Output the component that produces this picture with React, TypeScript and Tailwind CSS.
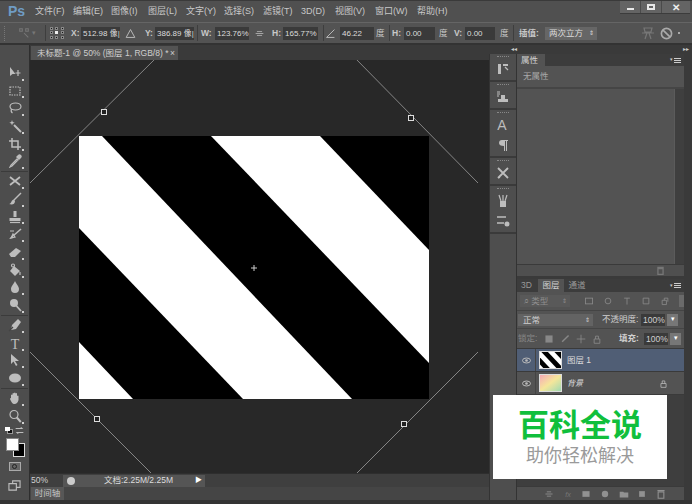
import React from "react";

const cjk = { fontFamily: '"Liberation Sans","Noto Sans CJK SC",sans-serif' };

const Ic = ({ children, w = 14, h = 14, className = "" }: { children: React.ReactNode; w?: number; h?: number; className?: string }) => (
  <svg width={w} height={h} viewBox="0 0 14 14" className={className} fill="none" stroke="#bdbdbd" strokeWidth="1.2">
    {children}
  </svg>
);

const fill = { fill: "#bdbdbd", stroke: "none" };

const tools: (React.ReactNode | null)[] = [
  <><path d="M2 1v9l2.500-2 3 0z" {...fill} /><path d="M10 4v6M7.500 7h5" /></>,
  <rect x="2" y="3" width="10" height="8" strokeDasharray="1.500 1" />,
  <><ellipse cx="7.500" cy="5.500" rx="5.500" ry="3.500" /><path d="M3.500 8q-1 3 1 4" /></>,
  <><path d="M6 6l7 7" strokeWidth="2" /><path d="M4 1l.7 2 2 .7-2 .7L4 6.500l-.7-2-2-.7 2-.7z" {...fill} /></>,
  <path d="M4 1v9h9M1 4h9v9" strokeWidth="1.500" />,
  <><path d="M9 5l-6 6-1 2 2-1 6-6z" /><path d="M8 3l3 3 2-2a1.400 1.400 0 0 0-3-3z" {...fill} /></>,
  null,
  <><path d="M2 3l10 8M12 3L2 11" strokeWidth="1.800" /></>,
  <><path d="M13 1L6 8" strokeWidth="1.400" /><path d="M6 7.500c-3 0-2 4-5 4.500 3 1 6 .5 6-3z" {...fill} /></>,
  <><path d="M5.500 1h3v6h-3zM1.500 8h11v3h-11z" {...fill} /><path d="M2 12.500h10" /></>,
  <><path d="M13 2L5 9" strokeWidth="1.500" /><path d="M2 4h4M3 11l4-1-2-3z" /><path d="M5 8l-4 4 4-1z" {...fill} /></>,
  <path d="M1 9l7-6 5 3-6 6H3z" {...fill} />,
  <><path d="M6 3l6 5-5 5-5-5z" {...fill} /><path d="M12 9v3" /><circle cx="5" cy="2.500" r="1.500" /></>,
  <path d="M7 1c1 3 4 5 4 8a4 4 0 0 1-8 0c0-3 3-5 4-8z" {...fill} />,
  <><circle cx="6" cy="5" r="4" {...fill} /><path d="M8.500 8l4.500 5" strokeWidth="1.800" /></>,
  null,
  <><path d="M10 1l3 3-5 7-5 1 1-5z" {...fill} /><path d="M1 13l4-4" stroke="#444" /></>,
  <text x="7" y="12.500" textAnchor="middle" fontFamily="Liberation Serif" fontSize="14" fill="#bdbdbd" stroke="none">T</text>,
  <path d="M3 1v10l2.500-2.500L8 13l1.500-1L7 8h4z" {...fill} />,
  <ellipse cx="7" cy="7" rx="6" ry="4.500" {...fill} />,
  null,
  <path d="M3 7V4q1-1 1.500 0V2.500q1-1 1.500 0V2q1-1 1.500 0v.500q1-1 1.500 0V5q1-1 1.500 0v4q-1 4-4 4H6Q4 13 2 8q0-1 1-1z" {...fill} />,
  <><circle cx="6" cy="5.500" r="4" /><path d="M8.800 8.500l4 4.500" strokeWidth="2" /></>,
];

const Tool = ({ children }: { children: React.ReactNode }) => (
  <div className="relative h-[17.700px] shrink-0 flex items-center justify-center">
    {children}
    <span className="absolute right-[5px] bottom-[1px] w-[2px] h-[2px] bg-[#cfcfcf]" />
  </div>
);

const Toolbar = () => (
  <div className="w-[30px] shrink-0 bg-[#4d4d4d] border-r border-[#2e2e2e] flex flex-col pt-[19px] overflow-hidden">
    {tools.map((t, i) =>
      t === null ? (
        <div key={i} className="h-[1px] my-[0.650px] mx-[1px] bg-[#3b3b3b] shrink-0" />
      ) : (
        <Tool key={i}><Ic>{t}</Ic></Tool>
      )
    )}
    <div className="h-[12px] shrink-0 flex items-center justify-between px-[5px]">
      <span className="relative w-[8px] h-[7px]">
        <span className="absolute right-0 bottom-0 w-[6px] h-[5px] bg-[#111] border border-[#999]" />
        <span className="absolute left-0 top-0 w-[5px] h-[4px] bg-white" />
      </span>
      <Ic w={9} h={9}><path d="M1 4h10l-2-2M13 10H3l2 2" strokeWidth="1.600" /></Ic>
    </div>
    <div className="relative h-[22px] shrink-0">
      <span className="absolute left-[13px] top-[6px] w-[12px] h-[14px] bg-black border border-[#ddd]" />
      <span className="absolute left-[6px] top-[1px] w-[13px] h-[13px] bg-white border border-[#888]" />
    </div>
    <div className="h-[16px] shrink-0 flex items-center justify-center">
      <span className="w-[12px] h-[9px] bg-[#666] border border-[#aaa] flex items-center justify-center">
        <span className="w-[5px] h-[5px] rounded-full border border-[#222]" />
      </span>
    </div>
    <div className="h-[18px] shrink-0 flex items-center justify-center mt-[2px]">
      <Ic w={13} h={13}><path d="M1 5h8v7H1zM5 5V2h8v7H9" /></Ic>
    </div>
  </div>
);

const menus: [string, number][] = [["文件(F)", 38], ["编辑(E)", 38], ["图像(I)", 37], ["图层(L)", 38], ["文字(Y)", 38], ["选择(S)", 39], ["滤镜(T)", 38], ["3D(D)", 34], ["视图(V)", 40], ["窗口(W)", 42], ["帮助(H)", 34]];

const MenuBar = () => (
  <div className="h-[22px] bg-[#505050] border-t border-[#3a3a3a] flex items-center relative">
    <div className="w-[28px] pl-[8px] text-[14px] font-bold text-[#6f9cc4]" style={{ fontFamily: "Liberation Sans" }}>Ps</div>
    <div className="flex ml-[7px] text-[9px] text-[#c8c8c8]">
      {menus.map(([m, w]) => <span key={m} style={{ width: w }} className="whitespace-nowrap">{m}</span>)}
    </div>
    <div className="absolute right-[2px] top-0 h-[13px] w-[70px] flex bg-[#646464] border-b border-[#3c3c3c]">
      <div className="flex-1 flex items-center justify-center border-r border-[#4a4a4a]"><span className="w-[7px] h-[2px] bg-[#e8e8e8] mt-[3px]" /></div>
      <div className="flex-1 flex items-center justify-center border-r border-[#4a4a4a]"><span className="w-[8px] h-[6px] border-2 border-[#e8e8e8]" /></div>
      <div className="flex-[1.400] flex items-center justify-center text-[#eee] text-[10px] font-bold" style={{ fontFamily: "Liberation Sans" }}>✕</div>
    </div>
  </div>
);

const Field = ({ w, children, ml = 0 }: { w: number; children: React.ReactNode; ml?: number }) => (
  <div style={{ width: w, marginLeft: ml }} className="h-[13px] bg-[#3a3a3a] text-[#dcdcdc] text-[8px] leading-[13px] pl-[2px] shrink-0 whitespace-nowrap">{children}</div>
);
const Lab = ({ w, children, ml = 0, b = false }: { w: number; children: React.ReactNode; ml?: number; b?: boolean }) => (
  <div style={{ width: w, marginLeft: ml }} className={`text-[8.500px] text-[#c8c8c8] shrink-0 whitespace-nowrap ${b ? "font-bold" : ""}`}>{children}</div>
);
const VSep = ({ ml }: { ml: number }) => <div style={{ marginLeft: ml }} className="w-[1px] h-[16px] bg-[#3e3e3e] shrink-0" />;

const OptionsBar = () => (
  <div className="h-[23px] bg-[#535353] border-t border-[#656565] border-b-2 border-b-[#333] flex items-center">
    <div className="w-[5px] ml-[4px] h-[15px] border-l border-dotted border-[#777]" />
    <div className="ml-[9px] w-[22px] flex items-center text-[#777] text-[7px] gap-[2px]">
      <Ic w={12} h={12}><path d="M2 2h3v3H2zM7 7l5 5M9 2h3v3H9z" stroke="#777" /></Ic><span>▾</span>
    </div>
    <VSep ml={5} />
    <div className="ml-[4px] w-[15px] h-[13px] grid grid-cols-3 gap-[1px] shrink-0">
      {[0,1,2,3,4,5,6,7,8].map((i) => <span key={i} className={i === 4 ? "w-[3px] h-[3px] bg-[#eee]" : "w-[3px] h-[3px] bg-[#181818] border border-[#888]"} />)}
    </div>
    <Lab w={10} ml={6} b>X:</Lab>
    <Field w={39}>512.98 像|</Field>
    <Ic w={11} h={11} className="ml-[5px] mr-[4px] shrink-0"><path d="M7 2L1.500 12h11z" /></Ic>
    <Lab w={10} ml={5} b>Y:</Lab>
    <Field w={39}>386.89 像|</Field>
    <VSep ml={3} />
    <Lab w={14} ml={3} b>W:</Lab>
    <Field w={34}>123.76%</Field>
    <Ic w={9} h={9} className="mx-[6px] shrink-0"><path d="M1 7h12M3 4h8M3 10h8" /></Ic>
    <Lab w={11} ml={2} b>H:</Lab>
    <Field w={35}>165.77%</Field>
    <VSep ml={5} />
    <Ic w={11} h={11} className="ml-[1px] mr-[1px] shrink-0"><path d="M12 2L2 12h10" /></Ic>
    <Field w={34} ml={3}>46.22</Field>
    <Lab w={12} ml={2}>度</Lab>
    <VSep ml={1} />
    <Lab w={12} ml={2} b>H:</Lab>
    <Field w={31}>0.00</Field>
    <Lab w={12} ml={4}>度</Lab>
    <Lab w={9} ml={3} b>V:</Lab>
    <Field w={30} ml={2}>0.00</Field>
    <Lab w={12} ml={5}>度</Lab>
    <VSep ml={1} />
    <Lab w={25} ml={5} b>插值:</Lab>
    <div className="ml-[1px] w-[52px] h-[13px] bg-[#666] text-[#dcdcdc] text-[8.500px] leading-[13px] pl-[4px] shrink-0 flex justify-between pr-[3px]"><span>两次立方</span><span className="text-[6px]">⇕</span></div>
    <Ic w={14} h={14} className="ml-[44px] shrink-0"><path d="M3 2h8l-1 4H4zM1 7h12M4 13l2-6M10 13L8 7" stroke="#777" /></Ic>
    <Ic w={13} h={13} className="ml-[5px] shrink-0"><circle cx="7" cy="7" r="5.500" strokeWidth="1.800" stroke="#aaa" /><path d="M3 3l8 8" strokeWidth="1.800" stroke="#aaa" /></Ic>
    <span className="ml-[5px] w-[2px] h-[2px] bg-[#aaa] shrink-0" />
  </div>
);

const Handle = ({ x, y }: { x: number; y: number }) => (
  <rect x={x - 2.500} y={y - 2.500} width="5" height="5" fill="#222" stroke="#ddd" />
);

const Canvas = () => (
  <div className="relative flex-1 bg-[#282828] overflow-hidden">
    {/* origin of this area is page (30, 60) */}
    <svg className="absolute left-[49px] top-[76px]" width="350" height="263" viewBox="79 136 350 263">
      <rect x="79" y="136" width="350" height="263" fill="#000" />
      <path d="M79 136H102L352 399H243L79 228z" fill="#fff" />
      <path d="M211 136H320L429 250V363z" fill="#fff" />
      <path d="M79 342L133 399H79z" fill="#fff" />
    </svg>
    <svg className="absolute left-0 top-0" width="460" height="413" viewBox="30 60 460 413">
      <g stroke="#858585" strokeWidth="1" fill="none">
        <path d="M30 183L156 58" />
        <path d="M355 58L478 183" />
        <path d="M30 352L156 478" />
        <path d="M478 352L355 475" />
      </g>
      <Handle x={104} y={112} />
      <Handle x={411} y={118} />
      <Handle x={97} y={419} />
      <Handle x={404} y={424} />
      <path d="M254 263.500v9M249.500 268h9" stroke="#000" strokeWidth="1" />
      <path d="M254 265v6M251 268h6" stroke="#ccc" strokeWidth="1" />
    </svg>
  </div>
);

const DocArea = () => (
  <div className="flex-1 flex flex-col min-w-0 bg-[#282828]">
    <div className="h-[15px] bg-[#3a3a3a] flex items-end shrink-0">
      <div className="ml-[1px] w-[147px] h-[14px] bg-[#535353] text-[#cfcfcf] text-[8.500px] leading-[14px] pl-[6px] whitespace-nowrap flex justify-between pr-[3px]">
        <span>未标题-1 @ 50% (图层 1, RGB/8) *</span><span>×</span>
      </div>
    </div>
    <Canvas />
    <div className="h-[14px] bg-[#3f3f3f] border-t border-[#2e2e2e] flex items-center text-[8.500px] text-[#d0d0d0] shrink-0">
      <span className="w-[33px] pl-[1px]">50%</span>
      <div className="w-[132px] h-[12px] bg-[#555] flex items-center">
        <span className="ml-[4px] w-[8px] h-[8px] rounded-full bg-[#ccc]" />
        <span className="ml-[29px] whitespace-nowrap text-[#ddd]">文档:2.25M/2.25M</span>
      </div>
      <div className="w-[10px] h-[12px] bg-[#555] text-[7px] text-white flex items-center">▶</div>
    </div>
    <div className="h-[13px] bg-[#454545] flex items-center shrink-0">
      <span className="ml-[1px] w-[33px] h-[13px] bg-[#575757] text-[8.500px] text-[#c8c8c8] leading-[13px] text-center">时间轴</span>
    </div>
  </div>
);

const dockGroups: React.ReactNode[][] = [
  [<><path d="M2 2h3v10H2zM7 2h5v2H7z" {...fill} /><path d="M9 5l3 3" /></>],
  [<><path d="M5 5h4v4H5zM2 9h10v3H2z" {...fill} /><path d="M1 2h3M1 4h3M1 6h2" /></>],
  [
    <text x="6" y="12" textAnchor="middle" fontFamily="Liberation Sans" fontSize="14" fill="#bdbdbd" stroke="none">A</text>,
    <path d="M6 2h6v1h-1v10h-1V3H9v10H8V8Q3 8 3 5t3-3z" {...fill} />,
  ],
  [<path d="M2 2l10 10M12 2L2 12M2 12l2-1" strokeWidth="1.800" />],
  [
    <><path d="M4 7h6v6H4z" {...fill} /><path d="M5 7L3 1M7 7V1M9 7l2-6" /></>,
    <><path d="M1 3h9M1 9h7" strokeWidth="1.500" /><circle cx="11" cy="10" r="2.500" {...fill} /></>,
  ],
];

const Dock = () => (
  <div className="w-[28px] shrink-0 bg-[#4e4e4e] border-x border-[#333] flex flex-col">
    {dockGroups.map((g, i) => (
      <div key={i} className="border-b-2 border-[#3a3a3a] pt-[2px] pb-[1px]">
        <div className="h-[2px] mx-[7px] border-t border-dotted border-[#888] mb-[1px]" />
        {g.map((c, j) => <div key={j} className="h-[20px] flex items-center justify-center"><Ic>{c}</Ic></div>)}
      </div>
    ))}
  </div>
);

const PanelMenu = () => (
  <span className="flex items-center gap-[1px] mr-[3px]">
    <span className="text-[5px] text-[#ccc]">▾</span>
    <span className="w-[7px] h-[5px] border-y border-[#ccc] relative"><span className="absolute left-0 right-0 top-[1px] h-[1px] bg-[#ccc]" /></span>
  </span>
);

const Properties = () => (
  <div className="h-[222px] flex flex-col shrink-0">
    <div className="h-[12px] bg-[#3c3c3c] flex justify-between items-center">
      <span className="w-[28px] h-[12px] bg-[#535353] text-[8.500px] text-[#d0d0d0] leading-[12px] pl-[4px]">属性</span>
      <PanelMenu />
    </div>
    <div className="h-[23px] bg-[#535353] border-b-2 border-[#454545] text-[8.500px] text-[#a8a8a8] leading-[21px] pl-[6px]">无属性</div>
    <div className="flex-1 flex bg-[#535353]">
      <div className="flex-1" />
      <div className="w-[10px] bg-[#3f3f3f] border-l border-[#5b5b5b]" />
    </div>
    <div className="h-[12px] bg-[#4f4f4f] border-t border-[#3a3a3a] flex justify-end items-center pr-[19px]">
      <Ic w={9} h={9}><path d="M3 4h8v9H3zM2 2h10" stroke="#777" strokeWidth="2" /></Ic>
    </div>
  </div>
);

const LayerRow = ({ active, children, thumb, right }: { active?: boolean; children: React.ReactNode; thumb: React.ReactNode; right?: React.ReactNode }) => (
  <div className={`h-[23px] flex items-center border-b border-[#3a3a3a] ${active ? "bg-[#505e75]" : "bg-[#535353]"}`}>
    <div className="w-[19px] h-full flex items-center justify-center border-r border-[#444]">
      <svg width="9" height="7" viewBox="0 0 9 7"><ellipse cx="4.500" cy="3.500" rx="4" ry="2.500" fill="none" stroke="#bbb" /><circle cx="4.500" cy="3.500" r="1.300" fill="#bbb" /></svg>
    </div>
    <div className="ml-[3px] w-[23px] h-[18px] shrink-0 border border-[#ddd] overflow-hidden">{thumb}</div>
    <div className="ml-[5px] flex-1 text-[8.500px] text-[#dcdcdc] whitespace-nowrap">{children}</div>
    {right}
  </div>
);

const Layers = () => (
  <div className="flex-1 flex flex-col min-h-0 mt-[3px]">
    <div className="h-[13px] bg-[#3c3c3c] flex items-end justify-between text-[8.500px] text-[#999] shrink-0">
      <div className="flex items-end">
        <span className="w-[21px] pl-[4px] leading-[13px]">3D</span>
        <span className="w-[26px] h-[13px] bg-[#535353] text-[#d0d0d0] text-center leading-[13px]">图层</span>
        <span className="w-[26px] text-center leading-[13px]">通道</span>
      </div>
      <div className="self-center"><PanelMenu /></div>
    </div>
    <div className="h-[19px] bg-[#535353] border-b border-[#444] flex items-center shrink-0">
      <div className="ml-[3px] w-[50px] h-[12px] bg-[#595959] text-[8.500px] text-[#8f8f8f] leading-[12px] pl-[4px] flex justify-between pr-[3px]"><span>⌕ 类型</span><span className="text-[6px]">⇕</span></div>
      <div className="ml-[14px] flex gap-[9px]">
        {[<rect x="2" y="3" width="10" height="8" />, <circle cx="7" cy="7" r="4" />, <path d="M3 3h8M7 3v9" />, <path d="M3 3h8v8H3z" />, <path d="M3 6h6v6H3zM6 6V3h5v5" />].map((c, i) => <Ic key={i} w={10} h={10} className="opacity-50">{c}</Ic>)}
      </div>
      <span className="ml-[9px] w-[5px] h-[12px] bg-[#6a6a6a]" />
    </div>
    <div className="h-[18px] bg-[#535353] border-b border-[#454545] flex items-center shrink-0 text-[8.500px] text-[#d0d0d0]">
      <div className="ml-[1px] w-[75px] h-[12px] bg-[#636363] pl-[5px] leading-[12px] flex justify-between pr-[3px]"><span>正常</span><span className="text-[6px]">⇕</span></div>
      <span className="ml-[9px] w-[39px] whitespace-nowrap">不透明度:</span>
      <span className="w-[24px] h-[12px] bg-[#3a3a3a] leading-[12px] pl-[2px]">100%</span>
      <span className="ml-[2px] w-[11px] h-[12px] bg-[#777] text-center leading-[10px] text-[7px] text-white">▾</span>
    </div>
    <div className="h-[20px] bg-[#535353] border-b border-[#3a3a3a] flex items-center shrink-0 text-[8.500px] text-[#d0d0d0]">
      <span className="ml-[1px] w-[26px] text-[#888] whitespace-nowrap">锁定:</span>
      <div className="flex gap-[6px]">
        {[<path d="M2 2h10v10H2z" {...fill} />, <path d="M12 2L3 11" strokeWidth="2" />, <path d="M7 1v12M1 7h12" />, <path d="M3 7h8v6H3zM5 7V3h4v4" />].map((c, i) => <Ic key={i} w={10} h={10} className="opacity-50">{c}</Ic>)}
      </div>
      <span className="ml-[17px] w-[25px] whitespace-nowrap font-bold">填充:</span>
      <span className="w-[24px] h-[12px] bg-[#3a3a3a] leading-[12px] pl-[2px]">100%</span>
      <span className="ml-[2px] w-[11px] h-[12px] bg-[#777] text-center leading-[10px] text-[7px] text-white">▾</span>
    </div>
    <div className="flex-1 bg-[#3e3e3e] min-h-0 flex flex-col">
      <LayerRow active thumb={
        <svg width="21" height="16" viewBox="79 136 350 263" preserveAspectRatio="none">
          <rect x="79" y="136" width="350" height="263" fill="#000" />
          <path d="M79 136H102L352 399H243L79 228z" fill="#fff" /><path d="M211 136H320L429 250V363z" fill="#fff" /><path d="M79 342L133 399H79z" fill="#fff" />
        </svg>
      }>图层 1</LayerRow>
      <LayerRow thumb={<div className="w-full h-full bg-gradient-to-br from-[#f4a9b4] via-[#f5e69a] to-[#9ed9b0]" />} right={
        <Ic w={9} h={9} className="mr-[16px]"><path d="M3 7h8v6H3zM5 7V3h4v4" /></Ic>
      }><span className="italic text-[8px]">背景</span></LayerRow>
    </div>
    <div className="h-[14px] bg-[#4f4f4f] border-t border-[#3a3a3a] flex items-center justify-end gap-[8.700px] pr-[18px] shrink-0">
      {[<path d="M2 7h10M4 4h6M4 10h6" />, <text x="7" y="11" textAnchor="middle" fontSize="10" fontStyle="italic" fill="#8f8f8f" stroke="none">fx</text>, <path d="M2 3h10v8H2z" {...fill} />, <circle cx="7" cy="7" r="4.500" {...fill} />, <path d="M1 4h5l1 1h6v7H1z" {...fill} />, <path d="M3 3h8v8H3z" {...fill} />, <path d="M3 4h8v9H3zM2 2h10" strokeWidth="1.500" />].map((c, i) => <Ic key={i} w={10} h={10} className="opacity-60">{c}</Ic>)}
    </div>
  </div>
);

const RightPanels = () => (
  <div className="w-[171px] shrink-0 bg-[#3a3a3a] flex flex-col pr-[4px]">
    <Properties />
    <Layers />
  </div>
);

export default function App() {
  return (
    <div className="relative w-[692px] h-[504px] overflow-hidden bg-[#333] flex flex-col" style={cjk}>
      <MenuBar />
      <OptionsBar />
      <div className="flex h-[455px]">
        <Toolbar />
        <DocArea />
        <div className="w-[203px] shrink-0 flex flex-col bg-[#3a3a3a]">
          <div className="h-[9px] bg-[#3a3a3a] flex justify-between text-[6px] text-[#ccc] leading-[9px] pl-[22px] pr-[3px] shrink-0"><span>◂◂</span><span>▸▸</span></div>
          <div className="flex-1 flex min-h-0">
            <Dock />
            <RightPanels />
          </div>
        </div>
      </div>
      <div className="absolute left-[493px] top-[395px] w-[174px] h-[84px] bg-white flex flex-col items-center justify-center">
        <div className="text-[31px] leading-[36px] font-bold text-[#10bf3c]">百科全说</div>
        <div className="text-[18px] leading-[22px] text-[#9a9a9a] mt-[1px]">助你轻松解决</div>
      </div>
    </div>
  );
}
